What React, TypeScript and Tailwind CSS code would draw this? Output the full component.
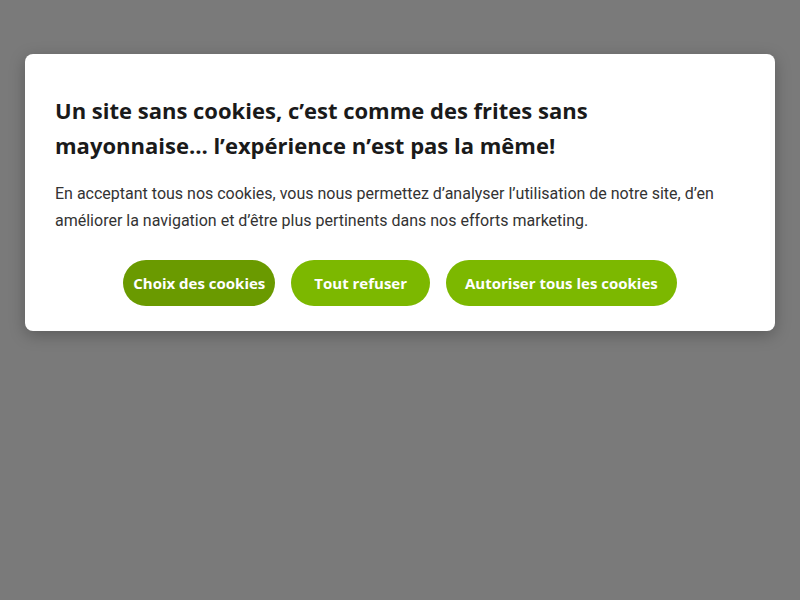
export default function App() {
  const buttons = [
    { label: "Choix des cookies", cls: "bg-[#6a9a00] px-[10px]" },
    { label: "Tout refuser", cls: "bg-[#7cb800] px-[23px]" },
    { label: "Autoriser tous les cookies", cls: "bg-[#7cb800] px-[19px]" },
  ];

  return (
    <div className="w-[800px] h-[600px] bg-[#7a7a7a] pt-[54px] px-[25px]">
      <div className="bg-white rounded-lg shadow-[0_4px_16px_rgba(0,0,0,0.25)] pt-[39px] pb-[25px] px-[30px]">
        <h2 className="max-w-[600px] text-[22px] leading-[35px] font-bold text-[#1a1a1a] font-['Open_Sans','Noto_Sans',sans-serif]">
          Un site sans cookies, c’est comme des frites sans mayonnaise… l’expérience n’est pas la même!
        </h2>
        <p className="mt-[17px] text-[16px] leading-[27px] text-[#333] font-['Roboto',sans-serif]">
          En acceptant tous nos cookies, vous nous permettez d’analyser l’utilisation de notre site, d’en améliorer la navigation et d’être plus pertinents dans nos efforts marketing.
        </p>
        <div className="mt-[26px] flex justify-center gap-4">
          {buttons.map((b) => (
            <button
              key={b.label}
              className={`${b.cls} h-[46px] rounded-full text-white text-[15px] font-bold font-['Open_Sans',sans-serif]`}
            >
              {b.label}
            </button>
          ))}
        </div>
      </div>
    </div>
  );
}
